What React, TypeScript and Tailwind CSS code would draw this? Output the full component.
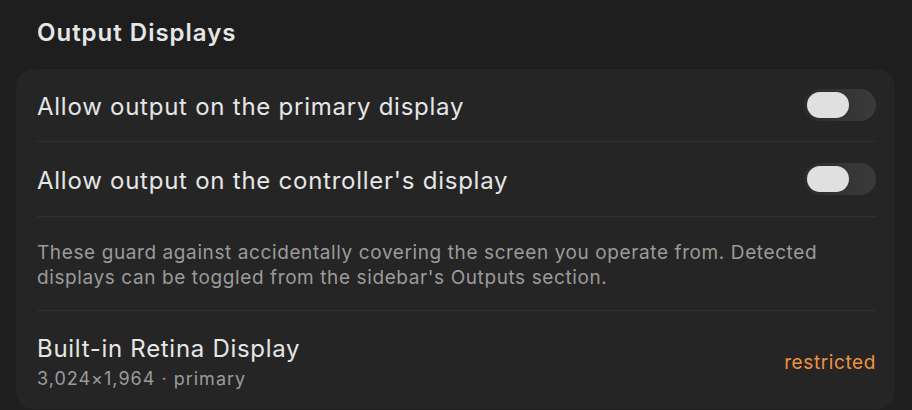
import React from "react";

function Toggle() {
  return (
    <div className="w-[72px] h-[32px] rounded-full bg-gradient-to-r from-[#2c2c2c] to-[#3b3b3b] p-[3px] flex items-center shrink-0">
      <div className="w-[42px] h-[26px] rounded-full bg-[#e0e0e0]" />
    </div>
  );
}

export default function App() {
  return (
    <div
      className="w-[912px] h-[410px] bg-[#1e1e1e] overflow-hidden pl-[16px] pr-[17px] pt-[19px]"
      style={{ fontFamily: "Inter, 'Noto Sans', sans-serif" }}
    >
      <div className="pl-[21px] h-[28px] text-[24px] leading-[28px] font-semibold text-[#e6e6e6] tracking-[1px]">
        Output Displays
      </div>
      <div className="mt-[22px] bg-[#252525] rounded-[18px] pl-[21px] pr-[19px] h-[340px]">
        <div className="h-[73px] flex items-center justify-between border-b border-[#303030]">
          <span className="text-[24px] leading-[28px] tracking-[0.75px] text-[#e6e6e6] pt-[3px]">Allow output on the primary display</span>
          <Toggle />
        </div>
        <div className="h-[75px] flex items-center justify-between border-b border-[#303030]">
          <span className="text-[24px] leading-[28px] tracking-[0.75px] text-[#e6e6e6] pt-[3px]">Allow output on the controller's display</span>
          <Toggle />
        </div>
        <div className="h-[94px] flex items-center border-b border-[#303030]">
          <p className="text-[19px] leading-[25px] tracking-[0.6px] text-[#9b9b9b] pt-[3px]">
            These guard against accidentally covering the screen you operate from. Detected displays can be toggled from the sidebar's Outputs section.
          </p>
        </div>
        <div className="h-[95px] flex items-center justify-between pt-[9px]">
          <div className="flex flex-col">
            <span className="text-[24px] leading-[28px] tracking-[0.7px] text-[#e6e6e6]">Built-in Retina Display</span>
            <span className="mt-[4px] text-[18px] leading-[24px] tracking-[1px] text-[#9b9b9b]">3,024×1,964 · primary</span>
          </div>
          <span className="text-[19px] tracking-[0.6px] text-[#f0923c] pt-[1px]">restricted</span>
        </div>
      </div>
    </div>
  );
}
